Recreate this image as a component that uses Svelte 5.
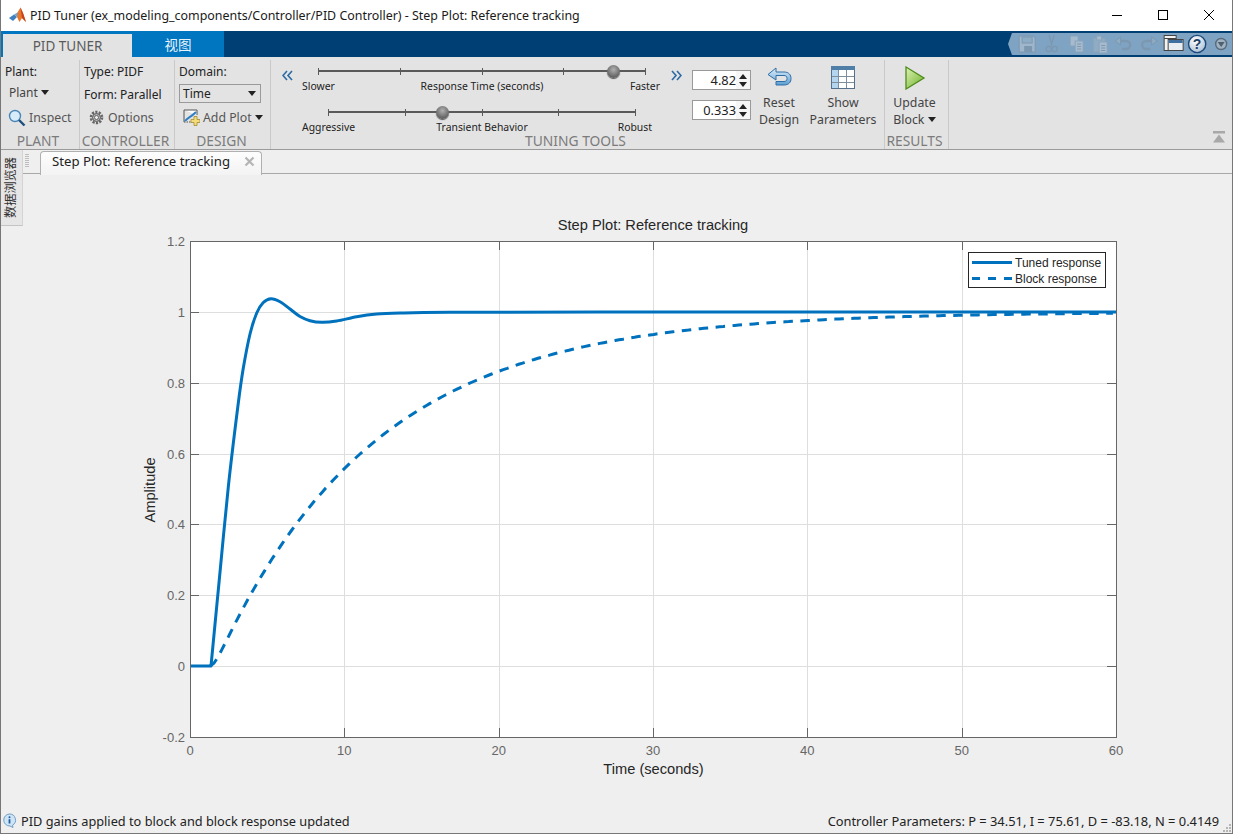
<script>
  const X0 = 190, X1 = 1116, Y0 = 666, PX = (X1 - X0) / 60, PY = 354;
  const xTicks = [0, 10, 20, 30, 40, 50, 60];
  const yTicks = [-0.2, 0, 0.2, 0.4, 0.6, 0.8, 1, 1.2];
  const xp = (t) => X0 + t * PX;
  const yp = (v) => Y0 - v * PY;
  const tuned = [[190,666],[211,666],[218.3,590],[228.3,487],[238.3,403],[243.3,368],[250,334],[256.7,313],[263.3,302.5],[271,298.7],[280,301.7],[290,309],[300,316.5],[310,320.7],[321.7,322.3],[336.7,321],[356.7,316.7],[376.7,314],[400,313],[450,312.3],[600,312],[1116,312]];
  function spline(p) {
    let d = `M${p[0][0]} ${p[0][1]} L${p[1][0]} ${p[1][1]}`;
    for (let i = 1; i < p.length - 1; i++) {
      const a = p[Math.max(i - 1, 1)], b = p[i], c = p[i + 1], e = p[Math.min(i + 2, p.length - 1)];
      const c1 = [b[0] + (c[0] - a[0]) / 6, b[1] + (c[1] - a[1]) / 6];
      const c2 = [c[0] - (e[0] - b[0]) / 6, c[1] - (e[1] - b[1]) / 6];
      d += ` C${c1[0].toFixed(1)} ${c1[1].toFixed(1)} ${c2[0].toFixed(1)} ${c2[1].toFixed(1)} ${c[0]} ${c[1]}`;
    }
    return d;
  }
  const tunedPath = spline(tuned);
  const blockPts = [];
  for (let t = 1.3; t <= 60; t += 0.25) {
    const s = t - 1.3;
    const v = 1 - (10.3 * Math.exp(-s / 10.3) - 0.3 * Math.exp(-s / 0.3)) / 10;
    blockPts.push(`${xp(t).toFixed(1)},${yp(v).toFixed(1)}`);
  }
  const blockLine = blockPts.join(' ');
  const fmt = (v) => (Number.isInteger(v) ? String(v) : v.toFixed(1));
  const ticks5 = [0, 1, 2, 3, 4];
  const qaFaded = ['save', 'cut', 'copy', 'paste', 'undo', 'redo'];
</script>

<div class="window">
  <header class="titlebar">
    <svg class="logo" width="18" height="18" viewBox="0 0 18 18">
      <polygon points="0,11 5,7.5 8,10 4,14" fill="#3f7fbf"/>
      <polygon points="5,7.5 8,10 10,6 8.5,5.5" fill="#6aa5d8"/>
      <polygon points="8.5,5.5 11.5,0.5 14,6 17,15 13,11 10.5,15 8,10" fill="#e8762b"/>
      <polygon points="11.5,0.5 14,6 17,15 13,11" fill="#c8431c"/>
    </svg>
    <span class="title">PID Tuner (ex_modeling_components/Controller/PID Controller) - Step Plot: Reference tracking</span>
    <div class="winbtns">
      <svg width="12" height="12" viewBox="0 0 12 12"><path d="M1 6.5H11" stroke="#000" fill="none"/></svg>
      <svg width="12" height="12" viewBox="0 0 12 12"><rect x="1.5" y="1.5" width="9" height="9" stroke="#000" fill="none"/></svg>
      <svg width="12" height="12" viewBox="0 0 12 12"><path d="M1 1L11 11M11 1L1 11" stroke="#000" fill="none"/></svg>
    </div>
  </header>

  <nav class="tabstrip">
    <div class="tab active">PID TUNER</div>
    <div class="tab other">视图</div>
    <div class="qab">
      {#each qaFaded as k}
        <svg class="qicon" width="24" height="20" viewBox="0 0 24 20">
          {#if k === 'save'}
            <path d="M4 2H18L20 4V18H4Z" fill="#a0b6ca" stroke="#7c98b1"/><rect x="7" y="3" width="10" height="6" fill="#8facc5" stroke="#7c98b1"/><rect x="9" y="12" width="8" height="6" fill="#7c98b1"/>
          {:else if k === 'cut'}
            <path d="M15 1L12 12M10 1L12 9" stroke="#7c98b1" stroke-width="1.3" fill="none"/><circle cx="9.5" cy="15" r="2.6" stroke="#7c98b1" stroke-width="1.3" fill="none"/><circle cx="15.5" cy="15" r="2.6" stroke="#7c98b1" stroke-width="1.3" fill="none"/>
          {:else if k === 'copy'}
            <rect x="6" y="2" width="8" height="10" fill="#a6bbce" stroke="#8aa3b9"/><rect x="11" y="7" width="8" height="11" fill="#a6bbce" stroke="#8aa3b9"/><path d="M13 10H17M13 12.5H17M13 15H17" stroke="#7d98b0"/>
          {:else if k === 'paste'}
            <rect x="5" y="4" width="12" height="14" fill="#8facc5" stroke="#8aa3b9"/><rect x="8.5" y="2" width="5" height="4" fill="#a6bbce" stroke="#8aa3b9"/><rect x="11" y="8" width="8" height="11" fill="#a6bbce" stroke="#8aa3b9"/><path d="M13 11.5H17M13 14H17M13 16.5H17" stroke="#7d98b0"/>
          {:else if k === 'undo'}
            <path d="M7 7H14a4 4 0 0 1 0 8H10" stroke="#7c98b1" stroke-width="2.4" fill="none"/><polygon points="3,7 8.5,3 8.5,11" fill="#8facc5" stroke="#7c98b1"/>
          {:else}
            <path d="M17 7H10a4 4 0 0 0 0 8H14" stroke="#7c98b1" stroke-width="2.4" fill="none"/><polygon points="21,7 15.5,3 15.5,11" fill="#8facc5" stroke="#7c98b1"/>
          {/if}
        </svg>
      {/each}
      <svg class="qicon" width="24" height="20" viewBox="0 0 24 20">
        <rect x="3" y="1.5" width="12" height="15" fill="#f2f2f2" stroke="#444"/><path d="M3 4.5H15" stroke="#444"/>
        <rect x="7" y="5.5" width="15" height="11" fill="#e8edf2" stroke="#444"/><rect x="7.5" y="6" width="14" height="3" fill="#3f6f9f"/>
      </svg>
      <svg class="qicon" width="24" height="20" viewBox="0 0 24 20">
        <defs><radialGradient id="helpg" cx="40%" cy="30%" r="75%"><stop offset="0" stop-color="#fff"/><stop offset="1" stop-color="#a9bfd4"/></radialGradient></defs>
        <circle cx="12" cy="10" r="8.6" fill="url(#helpg)" stroke="#1d4a7a" stroke-width="1.4"/>
        <text x="12" y="15" class="helpq">?</text>
      </svg>
      <svg class="qicon" width="24" height="20" viewBox="0 0 24 20">
        <circle cx="12" cy="10" r="5.5" fill="#9fb2c3" stroke="#5a6b7a" stroke-width="1.4"/><polygon points="8.5,8 15.5,8 12,13" fill="#4f5f6e"/>
      </svg>
    </div>
  </nav>

  <section class="toolstrip">
    <div class="sec plant">
      <div class="rows">
        <div class="lbl">Plant:</div>
        <div class="lbl indent4">Plant <i class="caret"></i></div>
        <div class="iconrow indent3">
          <svg width="18" height="18" viewBox="0 0 18 18"><circle cx="7" cy="7" r="5.5" fill="#d7ebf9" stroke="#4a86b8" stroke-width="1.4"/><path d="M11 11L16.5 16.5" stroke="#1f4f7f" stroke-width="2.4"/></svg>
          <span class="soft">Inspect</span>
        </div>
      </div>
      <div class="seclabel">PLANT</div>
    </div>
    <div class="sec controller">
      <div class="rows">
        <div class="lbl pl4">Type: PIDF</div>
        <div class="lbl pl4">Form: Parallel</div>
        <div class="iconrow pl9">
          <svg width="15" height="15" viewBox="0 0 15 15"><circle cx="7.5" cy="7.5" r="5.6" fill="none" stroke="#666" stroke-width="2.4" stroke-dasharray="2.2 1.3"/><circle cx="7.5" cy="7.5" r="4" fill="#b5b5b5" stroke="#555"/><circle cx="7.5" cy="7.5" r="2" fill="#eee" stroke="#666"/></svg>
          <span class="soft">Options</span>
        </div>
      </div>
      <div class="seclabel">CONTROLLER</div>
    </div>
    <div class="sec design">
      <div class="rows">
        <div class="lbl pl4">Domain:</div>
        <div class="select"><span>Time</span><i class="caret"></i></div>
        <div class="iconrow addplot">
          <svg width="17" height="17" viewBox="0 0 17 17"><path d="M1 1H14V6M1 1V13" stroke="#555" fill="#fff"/><path d="M1 13H9" stroke="#555" stroke-dasharray="1.5 1"/><path d="M2 12C5 8 7 9 13 3" stroke="#2f7fc4" stroke-width="2" fill="none"/><path d="M11 8V11H8V14H11V17H14V14H17V11H14V8Z" fill="#f3dc7a" stroke="#a68c2f" stroke-width=".8" transform="translate(0 -.5)"/></svg>
          <span class="soft">Add Plot</span><i class="caret"></i>
        </div>
      </div>
      <div class="seclabel">DESIGN</div>
    </div>
    <div class="sec tuning">
      <div class="tunebody">
        <svg class="chev" width="11" height="11" viewBox="0 0 11 11"><path d="M5 1L1 5.5L5 10M10 1L6 5.5L10 10" stroke="#2d6aa5" stroke-width="1.6" fill="none"/></svg>
        <div class="sliders">
          <div class="track t1">
            {#each ticks5 as _}<span class="tick"></span>{/each}
            <span class="thumb" style="left:{90}%"></span>
          </div>
          <div class="scale">
            <span>Slower</span><span class="center">Response Time (seconds)</span><span class="end">Faster</span>
          </div>
          <div class="track t2">
            {#each ticks5 as _}<span class="tick"></span>{/each}
            <span class="thumb" style="left:{37}%"></span>
          </div>
          <div class="scale">
            <span>Aggressive</span><span class="center">Transient Behavior</span><span class="end pr8">Robust</span>
          </div>
        </div>
        <svg class="chev r" width="11" height="11" viewBox="0 0 11 11"><path d="M1 1L5 5.5L1 10M6 1L10 5.5L6 10" stroke="#2d6aa5" stroke-width="1.6" fill="none"/></svg>
        <div class="spinners">
          <div class="spin"><span class="val">4.82</span><span class="arrows"><i class="up"></i><i class="down"></i></span></div>
          <div class="spin"><span class="val">0.333</span><span class="arrows"><i class="up"></i><i class="down"></i></span></div>
        </div>
        <div class="bigbtn reset">
          <svg width="26" height="24" viewBox="0 0 26 24">
            <defs><linearGradient id="undog" x1="0" y1="0" x2="0" y2="1"><stop offset="0" stop-color="#e2f0fb"/><stop offset="1" stop-color="#5a9fd4"/></linearGradient></defs>
            <path d="M2 8.5L10 2V6H18C23 6 25 9 25 12.5C25 16 23 19 18 19H10V15.5H18C20 15.5 21 14.5 21 12.5C21 10.5 20 9.5 18 9.5H10V14Z" fill="url(#undog)" stroke="#2f6ea5"/>
          </svg>
          <span>Reset<br>Design</span>
        </div>
        <div class="bigbtn show">
          <svg width="24" height="24" viewBox="0 0 24 24">
            <rect x="0.5" y="0.5" width="23" height="22" fill="#fff" stroke="#55708a"/>
            <rect x="0" y="0" width="24" height="4" fill="#4f7ea6"/>
            <rect x="1" y="4" width="6" height="18" fill="#b4d5ef"/>
            <path d="M7.5 4V22M15.5 4V22M1 10.5H23M1 16.5H23" stroke="#7d8f9f"/>
          </svg>
          <span>Show<br>Parameters</span>
        </div>
      </div>
      <div class="seclabel">TUNING TOOLS</div>
    </div>
    <div class="sec results">
      <div class="bigbtn update">
        <svg width="22" height="24" viewBox="0 0 22 24">
          <defs><linearGradient id="playg" x1="0" y1="0" x2="1" y2="1"><stop offset="0" stop-color="#dff3b5"/><stop offset="1" stop-color="#6aae25"/></linearGradient></defs>
          <polygon points="2,1 20,12 2,23" fill="url(#playg)" stroke="#4d8c1c" stroke-width="1.3"/>
        </svg>
        <span>Update<br>Block <i class="caret"></i></span>
      </div>
      <div class="seclabel">RESULTS</div>
    </div>
    <svg class="collapse" width="12" height="12" viewBox="0 0 12 12"><rect x="0" y="0" width="12" height="2.5" fill="#a8a8a8"/><polygon points="6,3.5 12,11.5 0,11.5" fill="#a8a8a8"/></svg>
  </section>

  <div class="doctabs">
    <span class="grip"></span>
    <div class="doctab">
      <span>Step Plot: Reference tracking</span>
      <svg width="11" height="11" viewBox="0 0 11 11"><path d="M1.5 1.5L9.5 9.5M9.5 1.5L1.5 9.5" stroke="#b4b4b4" stroke-width="2.2"/></svg>
    </div>
  </div>

  <main class="plotarea">
    <div class="sidetab"><span>数据浏览器</span></div>
    <svg class="plot" width="1231" height="636" viewBox="1 174 1231 636">
      <rect x={X0} y="241.5" width={X1 - X0} height="496" fill="#fff"/>
      {#each xTicks.slice(1, -1) as t}
        <line x1={Math.round(xp(t)) + 0.5} x2={Math.round(xp(t)) + 0.5} y1="241" y2="737" stroke="#dedede"/>
      {/each}
      {#each yTicks.slice(1, -1) as v}
        <line x1={X0} x2={X1} y1={Math.round(yp(v)) + 0.5} y2={Math.round(yp(v)) + 0.5} stroke="#dedede"/>
      {/each}
      {#each xTicks.slice(1, -1) as t}
        <path d="M{Math.round(xp(t)) + 0.5} 241V250M{Math.round(xp(t)) + 0.5} 737V728" stroke="#666"/>
      {/each}
      {#each yTicks.slice(1, -1) as v}
        <path d="M190 {Math.round(yp(v)) + 0.5}H199M1116 {Math.round(yp(v)) + 0.5}H1107" stroke="#666"/>
      {/each}
      <polyline points={blockLine} fill="none" stroke="#0072bd" stroke-width="3" stroke-dasharray="9.5 7.5"/>
      <path d={tunedPath} fill="none" stroke="#0072bd" stroke-width="3" stroke-linejoin="round"/>
      <rect x="190.5" y="241.5" width="926" height="496" fill="none" stroke="#666"/>
      {#each xTicks as t}
        <text x={xp(t)} y="755" class="tl mid">{t}</text>
      {/each}
      {#each yTicks as v}
        <text x="185" y={yp(v) + 5} class="tl end">{fmt(v)}</text>
      {/each}
      <text x="653" y="230" class="cap mid">Step Plot: Reference tracking</text>
      <text x="653.5" y="774" class="cap mid">Time (seconds)</text>
      <text transform="translate(155 490) rotate(-90)" class="cap mid">Amplitude</text>
      <rect x="968.5" y="252.5" width="137" height="35" fill="#fff" stroke="#262626"/>
      <line x1="972" x2="1012" y1="262.5" y2="262.5" stroke="#0072bd" stroke-width="3"/>
      <line x1="972" x2="1012" y1="278.5" y2="278.5" stroke="#0072bd" stroke-width="3" stroke-dasharray="8 8"/>
      <text x="1015" y="267" class="leg">Tuned response</text>
      <text x="1015" y="283" class="leg">Block response</text>
    </svg>
  </main>

  <footer class="status">
    <svg width="15" height="15" viewBox="0 0 15 15"><path d="M7.5 1a6 6 0 0 1 3 11.2L11 14.5L8 13A6 6 0 1 1 7.5 1Z" fill="#cfe4f5" stroke="#6f9cc4"/><circle cx="7.5" cy="4.3" r="1" fill="#1e5fa0"/><path d="M7.5 6.2V10.5" stroke="#1e5fa0" stroke-width="1.8"/></svg>
    <span>PID gains applied to block and block response updated</span>
    <span class="params">Controller Parameters: P = 34.51, I = 75.61, D = -83.18, N = 0.4149</span>
    <svg class="sizegrip" width="10" height="10" viewBox="0 0 10 10"><path d="M7 1h2v2H7zM4 4h2v2H4zM7 4h2v2H7zM1 7h2v2H1zM4 7h2v2H4zM7 7h2v2H7z" fill="#b5b5b5"/></svg>
  </footer>
</div>

<style>
  :global(body) { margin: 0; background: #efefef; }
  .window {
    box-sizing: border-box; width: 1233px; height: 834px; border: 1px solid #777; border-top: 0;
    display: flex; flex-direction: column; overflow: hidden; position: relative;
    font-family: "Noto Sans", "Noto Sans CJK SC", sans-serif; font-size: 12px; color: #222; background: #efefef;
  }
  .titlebar { height: 31px; flex: none; background: #fff; display: flex; align-items: center; padding-left: 8px; }
  .logo { flex: none; }
  .title { margin-left: 3px; font-size: 12.43px; color: #1a1a1a; white-space: nowrap; }
  .winbtns { margin-left: auto; display: flex; gap: 34px; padding-right: 17px; margin-top: -1px; }

  .tabstrip { height: 26px; flex: none; background: #003f73; display: flex; position: relative; }
  .tab { display: flex; align-items: center; justify-content: center; box-sizing: border-box; font-size: 13.5px; }
  .tab.active { width: 131px; background: #e3e3e3; color: #5a5a5a; border-left: 2px solid #0076c0; border-top: 3px solid #0076c0; padding-top: 1px; }
  .tab.other { width: 92px; background: #0076c0; color: #e8f3fb; }
  .qab {
    margin-left: auto; width: 224px; height: 22px; margin-top: 2px; background: #7fa3c3; box-sizing: border-box;
    padding-left: 7px; display: flex; align-items: center;
    clip-path: polygon(0 50%, 4px 0, 100% 0, 100% 100%, 4px 100%);
  }
  .qicon { flex: none; width: 24.3px; }
  .helpq { font: bold 14px "Liberation Sans", sans-serif; fill: #1d3f66; text-anchor: middle; }

  .toolstrip {
    height: 93px; flex: none; box-sizing: border-box; background: #e3e3e3; border-bottom: 1px solid #9a9a9a;
    padding-top: 3px; display: flex; align-items: stretch; position: relative;
  }
  .sec { box-sizing: border-box; display: flex; flex-direction: column; border-right: 1px solid #c9c9c9; flex: none; }
  .plant { width: 79px; }
  .controller { width: 95px; }
  .design { width: 96px; }
  .tuning { width: 614px; }
  .results { width: 64px; }
  .rows { flex: 1; min-height: 0; display: grid; grid-auto-rows: 23px; align-content: start; align-items: center; }
  .seclabel { height: 16px; line-height: 16px; font-size: 13.8px; color: #7b7b7b; text-align: center; flex: none; white-space: nowrap; }
  .plant .seclabel { padding-right: 4px; }
  .controller .seclabel { padding-right: 3px; }
  .design .seclabel { padding-right: 2px; }
  .tuning .seclabel { padding-right: 4px; }
  .results .seclabel { padding-right: 4px; }
  .lbl { padding-left: 4px; white-space: nowrap; }
  .indent4 { padding-left: 8px; color: #444; margin-bottom: 4px; }
  .pl4 { padding-left: 4px; }
  .iconrow { display: flex; align-items: center; gap: 3px; white-space: nowrap; }
  .indent3 { padding-left: 7px; }
  .pl9 { padding-left: 9px; gap: 4px; }
  .soft { color: #555; font-size: 12.3px; }
  .caret { display: inline-block; width: 0; height: 0; border: 4px solid transparent; border-top: 5px solid #222; border-bottom: 0; vertical-align: 2px; }
  .select {
    margin: 0 9px 3px 4px; height: 19px; box-sizing: border-box; border: 1px solid #9a9a9a; padding: 0 4px 0 3px;
    display: flex; align-items: center; justify-content: space-between;
  }
  .addplot { padding-left: 8px; gap: 3px; }

  .tunebody { flex: 1; min-height: 0; display: flex; align-items: flex-start; }
  .chev { flex: none; margin: 10px 9px 0 11px; }
  .chev.r { margin: 10px 10px 0 11px; }
  .sliders { width: 358px; flex: none; padding-top: 5px; }
  .track {
    height: 12px; position: relative; display: flex; justify-content: space-between; align-items: center;
    background: linear-gradient(#5a5a5a, #5a5a5a) center / 100% 2px no-repeat;
  }
  .t1 { margin: 0 14px 0 16px; }
  .t2 { margin: 12px 24px 0 26px; }
  .tick { width: 1px; height: 7px; background: #5a5a5a; }
  .thumb {
    position: absolute; top: 0; width: 13px; height: 13px; margin-left: -6px; border-radius: 50%;
    background: radial-gradient(circle at 50% 35%, #b0b0b0, #5d5d5d 75%); box-shadow: 0 1px 1px #555;
  }
  .scale { display: grid; grid-template-columns: 1fr auto 1fr; height: 16px; line-height: 16px; font-size: 10.4px; color: #222; margin-top: 1px; white-space: nowrap; }
  .center { margin-left: 2px; }
  .end { text-align: right; }
  .pr8 { padding-right: 8px; }
  .spinners { flex: none; width: 59px; padding-top: 10px; display: flex; flex-direction: column; gap: 10px; }
  .spin { height: 20px; box-sizing: border-box; border: 1px solid #999; background: #fff; display: flex; align-items: center; justify-content: flex-end; }
  .val { font-size: 12.8px; }
  .arrows { width: 14px; height: 18px; background: #f6f6f6; display: flex; flex-direction: column; align-items: center; justify-content: center; gap: 3px; }
  .arrows i { width: 0; height: 0; border-left: 4px solid transparent; border-right: 4px solid transparent; }
  .up { border-bottom: 5px solid #222; }
  .down { border-top: 5px solid #222; }
  .bigbtn { display: flex; flex-direction: column; align-items: center; padding-top: 6px; flex: none; }
  .bigbtn svg { height: 24px; margin-bottom: 4px; flex: none; }
  .bigbtn span { line-height: 17px; text-align: center; color: #444; white-space: nowrap; font-size: 12.3px; }
  .reset { width: 52px; margin-left: 2px; }
  .show { width: 74px; margin-left: 1px; }
  .update { flex: 1; padding-right: 4px; }
  .collapse { position: absolute; right: 7px; top: 74px; }

  .doctabs { height: 24px; flex: none; background: #efefef; display: flex; align-items: flex-start; padding-left: 39px; position: relative; border-bottom: 1px solid #a8a8a8; box-sizing: border-box; }
  .grip { position: absolute; left: 24px; top: 4px; width: 4px; height: 14px; background: repeating-linear-gradient(#bdbdbd 0 1px, transparent 1px 2px); }
  .doctab {
    box-sizing: border-box; width: 222px; height: 24px; margin-top: 1px; border: 1px solid #b0b0b0; border-bottom: 0; border-radius: 4px 4px 0 0;
    background: linear-gradient(#fdfdfd, #f3f3f3); display: flex; align-items: center; justify-content: space-between; padding: 0 6px 5px 11px; font-size: 13.2px; color: #222; white-space: nowrap;
  }

  .plotarea { flex: 1; position: relative; min-height: 0; }
  .plot { display: block; }
  .sidetab {
    position: absolute; left: 0; top: -24px; width: 22px; height: 76px; background: #e6e6e6;
    border-bottom: 1px solid #c4c4c4; border-right: 1px solid #d4d4d4; box-sizing: border-box; display: flex; align-items: center; justify-content: center;
  }
  .sidetab span { writing-mode: vertical-rl; text-orientation: sideways; transform: rotate(180deg); font-size: 12.2px; color: #333; line-height: 1; }
  .tl { font: 13px "Liberation Sans", sans-serif; fill: #666; }
  .mid { text-anchor: middle; }
  text.end { text-anchor: end; }
  .cap { font: 14.65px "Liberation Sans", sans-serif; fill: #262626; }
  .leg { font: 12px "Liberation Sans", sans-serif; fill: #262626; }

  .status { height: 23px; flex: none; display: flex; align-items: center; padding: 0 0 2px 1px; box-sizing: border-box; gap: 4px; font-size: 12.75px; color: #222; position: relative; }
  .params { margin-left: auto; margin-right: 13px; font-size: 12.86px; }
  .sizegrip { position: absolute; right: 0; bottom: 0; }
</style>
